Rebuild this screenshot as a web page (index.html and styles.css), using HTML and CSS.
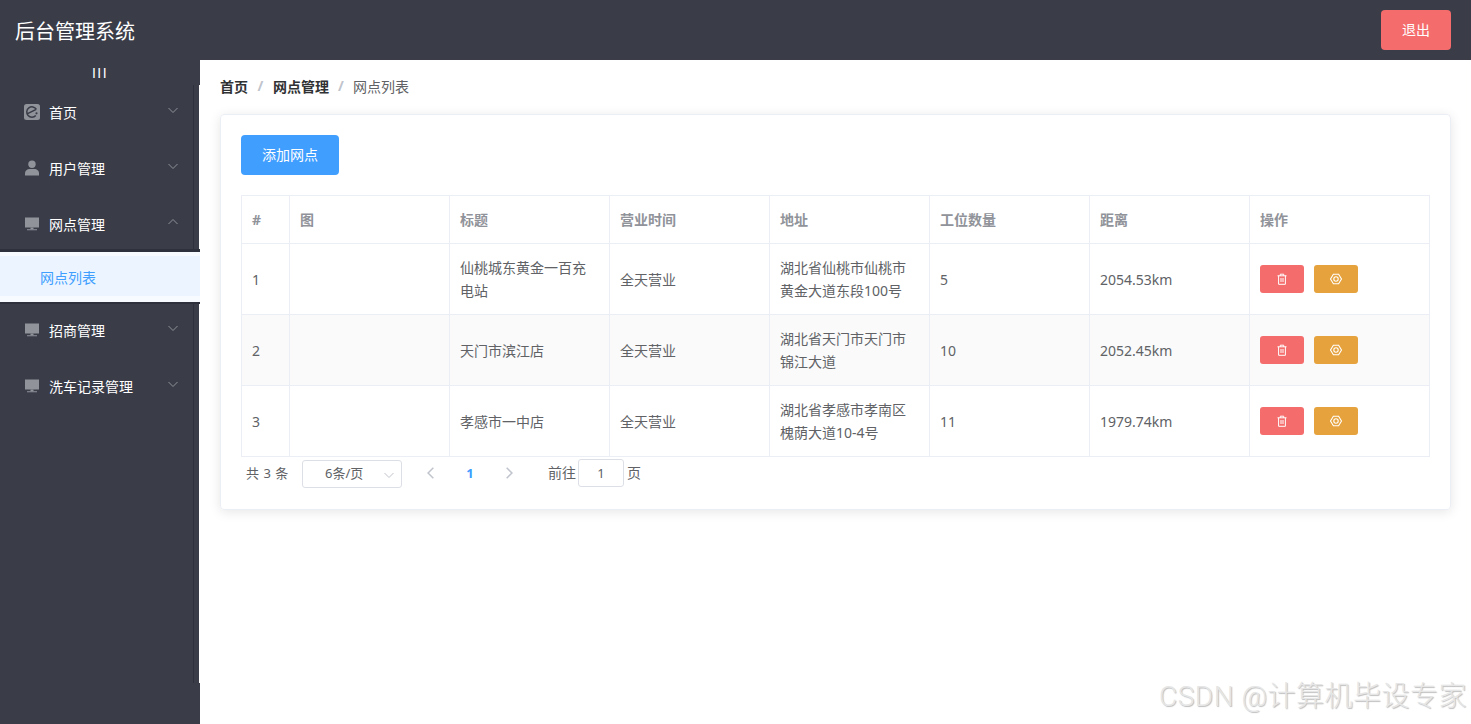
FILE: index.html
```html
<!DOCTYPE html>
<html lang="zh-CN">

<head>
    <meta charset="UTF-8">
    <title>后台管理系统</title>
    <link rel="stylesheet" href="styles.css">
</head>

<body>
    <svg class="defs" width="0" height="0">
        <symbol id="i-eleme" viewBox="0 0 16 16">
            <rect width="16" height="16" rx="2.500" fill="#909399"/>
            <path d="M12.400 5.300A5.200 5.200 0 1 0 11.800 11.500M3.600 9.700l8.600-4.400" fill="none" stroke="#3a3c48" stroke-width="1.500"/>
            <circle cx="12.500" cy="9.300" r="1.100" fill="#3a3c48"/>
        </symbol>
        <symbol id="i-user" viewBox="0 0 16 16">
            <circle cx="8" cy="4.200" r="3.700"/>
            <path d="M1 15.500v-2.300C1 10.800 3.200 9 5.500 9h5c2.300 0 4.500 1.800 4.500 4.200v2.300z"/>
        </symbol>
        <symbol id="i-screen" viewBox="0 0 16 16">
            <path d="M1 1.500h14V11.500H1zM3 13.200h10v1H3z"/>
            <path d="M6.500 11.500h3v1.800h-3z"/>
        </symbol>
        <symbol id="i-down" viewBox="0 0 12 12">
            <path d="M1.500 4 6 8.500 10.500 4" fill="none" stroke="currentColor" stroke-width="1"/>
        </symbol>
        <symbol id="i-trash" viewBox="0 0 12 12">
            <path d="M1.500 2.800h9M4.300 2.800V1.200h3.400v1.600M2.600 2.800v8.500h6.800V2.800M5 5v4M7 5v4" fill="none" stroke="currentColor" stroke-width="1"/>
        </symbol>
        <symbol id="i-gear" viewBox="0 0 12 12">
            <path d="M3.400 1.200h5.200L11.500 6 8.600 10.800H3.400L.5 6z" fill="none" stroke="currentColor" stroke-width="1.100"/>
            <circle cx="6" cy="6" r="2.200" fill="none" stroke="currentColor" stroke-width="1.100"/>
        </symbol>
    </svg>

    <div class="header">
        <div class="logo">后台管理系统</div>
        <button class="btn-logout">退出</button>
    </div>

    <div class="layout">
        <div class="sidebar">
            <div class="collapse-btn">III</div>
            <ul class="menu">
                <li class="menu-item">
                    <svg class="menu-icon"><use href="#i-eleme"/></svg>
                    <span class="menu-label">首页</span>
                    <svg class="menu-arrow"><use href="#i-down"/></svg>
                </li>
                <li class="menu-item">
                    <svg class="menu-icon"><use href="#i-user"/></svg>
                    <span class="menu-label">用户管理</span>
                    <svg class="menu-arrow"><use href="#i-down"/></svg>
                </li>
                <li class="menu-item">
                    <svg class="menu-icon"><use href="#i-screen"/></svg>
                    <span class="menu-label">网点管理</span>
                    <svg class="menu-arrow arrow-up"><use href="#i-down"/></svg>
                </li>
                <li class="submenu-item">网点列表</li>
                <li class="menu-item">
                    <svg class="menu-icon"><use href="#i-screen"/></svg>
                    <span class="menu-label">招商管理</span>
                    <svg class="menu-arrow"><use href="#i-down"/></svg>
                </li>
                <li class="menu-item">
                    <svg class="menu-icon"><use href="#i-screen"/></svg>
                    <span class="menu-label">洗车记录管理</span>
                    <svg class="menu-arrow"><use href="#i-down"/></svg>
                </li>
            </ul>
        </div>

        <div class="main">
            <div class="breadcrumb">
                <span class="crumb-link">首页</span>
                <span class="crumb-sep">/</span>
                <span class="crumb-link">网点管理</span>
                <span class="crumb-sep crumb-sep-last">/</span>
                <span class="crumb-current">网点列表</span>
            </div>

            <div class="card">
                <button class="btn-add">添加网点</button>

                <table class="data-table">
                    <thead>
                        <tr>
                            <th class="col-index">#</th>
                            <th class="col-std">图</th>
                            <th class="col-std">标题</th>
                            <th class="col-std">营业时间</th>
                            <th class="col-std">地址</th>
                            <th class="col-std">工位数量</th>
                            <th class="col-std">距离</th>
                            <th>操作</th>
                        </tr>
                    </thead>
                    <tbody>
                        <tr>
                            <td>1</td>
                            <td></td>
                            <td>仙桃城东黄金一百充电站</td>
                            <td>全天营业</td>
                            <td>湖北省仙桃市仙桃市黄金大道东段100号</td>
                            <td>5</td>
                            <td>2054.53km</td>
                            <td>
                                <div class="row-actions">
                                    <button class="btn-mini btn-danger"><svg><use href="#i-trash"/></svg></button>
                                    <button class="btn-mini btn-warning"><svg><use href="#i-gear"/></svg></button>
                                </div>
                            </td>
                        </tr>
                        <tr class="stripe">
                            <td>2</td>
                            <td></td>
                            <td>天门市滨江店</td>
                            <td>全天营业</td>
                            <td>湖北省天门市天门市锦江大道</td>
                            <td>10</td>
                            <td>2052.45km</td>
                            <td>
                                <div class="row-actions">
                                    <button class="btn-mini btn-danger"><svg><use href="#i-trash"/></svg></button>
                                    <button class="btn-mini btn-warning"><svg><use href="#i-gear"/></svg></button>
                                </div>
                            </td>
                        </tr>
                        <tr>
                            <td>3</td>
                            <td></td>
                            <td>孝感市一中店</td>
                            <td>全天营业</td>
                            <td>湖北省孝感市孝南区槐荫大道10-4号</td>
                            <td>11</td>
                            <td>1979.74km</td>
                            <td>
                                <div class="row-actions">
                                    <button class="btn-mini btn-danger"><svg><use href="#i-trash"/></svg></button>
                                    <button class="btn-mini btn-warning"><svg><use href="#i-gear"/></svg></button>
                                </div>
                            </td>
                        </tr>
                    </tbody>
                </table>

                <div class="pagination">
                    <span class="page-total">共 3 条</span>
                    <div class="page-size">
                        <span>6条/页</span>
                        <svg class="page-size-arrow"><use href="#i-down"/></svg>
                    </div>
                    <svg class="page-prev" viewBox="0 0 12 12"><path d="M8 1.500 3.500 6 8 10.500" fill="none" stroke="currentColor" stroke-width="1.300"/></svg>
                    <span class="page-num">1</span>
                    <svg class="page-next" viewBox="0 0 12 12"><path d="M4 1.500 8.500 6 4 10.500" fill="none" stroke="currentColor" stroke-width="1.300"/></svg>
                    <span class="page-jump">前往</span>
                    <span class="page-input">1</span>
                    <span class="page-unit">页</span>
                </div>
            </div>
        </div>
    </div>

    <div class="watermark">CSDN @计算机毕设专家</div>
</body>

</html>
```

FILE: styles.css
```css
* {
    margin: 0;
    padding: 0;
    box-sizing: border-box
}

html,
body {
    height: 724px;
    overflow: hidden
}

body {
    font-family: "Noto Sans", "Noto Sans CJK SC", sans-serif;
    font-size: 14px;
    color: #606266;
    background: #fff;
    position: relative
}

.defs {
    position: absolute
}

button {
    font-family: inherit;
    border: none;
    cursor: pointer
}

/* header */
.header {
    height: 60px;
    background: #3a3c48;
    display: flex;
    align-items: center;
    justify-content: space-between;
    padding: 0 20px 0 15px
}

.logo {
    font-size: 20px;
    color: #fff
}

.btn-logout {
    width: 70px;
    height: 40px;
    background: #f56c6c;
    color: #fff;
    font-size: 14px;
    border-radius: 4px;
    padding-bottom: 2px
}

/* sidebar */
.layout {
    display: flex;
    height: 664px
}

.sidebar {
    width: 200px;
    flex-shrink: 0;
    background: #3a3c48;
    position: relative
}

/* the thin strip down the right side of the menu */
.sidebar::before {
    content: '';
    position: absolute;
    top: 25px;
    left: 193px;
    width: 1px;
    height: 598px;
    background: #2e303b
}

.sidebar::after {
    content: '';
    position: absolute;
    top: 25px;
    right: 0;
    width: 1px;
    height: 598px;
    background: #fff
}

.collapse-btn {
    height: 24px;
    line-height: 26px;
    text-align: center;
    font-family: "Liberation Sans", sans-serif;
    font-size: 14px;
    color: #fff;
    letter-spacing: 1.500px
}

.menu {
    list-style: none
}

.menu-item {
    height: 56px;
    display: flex;
    align-items: center;
    padding-left: 24px;
    color: #fff;
    position: relative
}

.menu-icon {
    width: 16px;
    height: 16px;
    fill: #909399;
    margin-right: 9px
}

.menu-label {
    color: #fff
}

.menu-arrow {
    position: absolute;
    right: 21px;
    top: 20px;
    width: 12px;
    height: 12px;
    color: #909399
}

.arrow-up {
    transform: rotate(180deg)
}

.submenu-item {
    height: 50px;
    line-height: 44px;
    padding-left: 40px;
    font-size: 14px;
    color: #409eff;
    background: #ecf5ff;
    border-top: 4px solid #f7faff;
    border-bottom: 6px solid #f7faff;
    box-shadow: 0 -3px 0 #2e303b, 0 2px 0 #2e303b;
    position: relative;
    z-index: 1
}

/* main */
.main {
    flex: 1;
    padding: 0 21px 0 20px
}

.breadcrumb {
    height: 54px;
    display: flex;
    align-items: center;
    font-size: 14px;
    padding-bottom: 3px
}

.crumb-link {
    color: #303133;
    font-weight: 700
}

.crumb-sep {
    width: 25px;
    text-align: center;
    color: #c0c4cc;
    font-weight: 700
}

.crumb-sep-last {
    width: 24px
}

.crumb-current {
    color: #606266
}

.card {
    height: 396px;
    border: 1px solid #ebeef5;
    border-radius: 4px;
    box-shadow: 0 2px 12px rgba(0, 0, 0, .1);
    padding: 20px
}

.btn-add {
    display: block;
    width: 98px;
    height: 40px;
    background: #409eff;
    color: #fff;
    font-size: 14px;
    border-radius: 4px;
    margin-bottom: 20px;
    padding-bottom: 3px
}

.data-table {
    width: 1189px;
    border-collapse: collapse;
    table-layout: fixed
}

.data-table th,
.data-table td {
    border: 1px solid #ebeef5;
    padding: 0 10px;
    text-align: left;
    line-height: 23px
}

.data-table th {
    height: 48px;
    font-size: 14px;
    color: #909399;
    font-weight: 700
}

.data-table td {
    height: 71px
}

.col-index {
    width: 48px
}

.col-std {
    width: 160px
}

.stripe td {
    background: #fafafa
}

.row-actions {
    display: flex;
    gap: 10px
}

.btn-mini {
    width: 44px;
    height: 28px;
    border-radius: 3px;
    color: #fff;
    display: flex;
    align-items: center;
    justify-content: center
}

.btn-mini svg {
    width: 12px;
    height: 12px
}

.btn-danger {
    background: #f56c6c
}

.btn-warning {
    background: #e6a23c
}

/* pagination */
.pagination {
    display: flex;
    align-items: center;
    height: 32px;
    margin-left: 5px;
    font-size: 13px
}

.page-total {
    width: 56px;
    word-spacing: 1px;
    padding-bottom: 2px
}

.page-size {
    width: 100px;
    height: 28px;
    margin-top: 2px;
    border: 1px solid #dcdfe6;
    border-radius: 3px;
    display: flex;
    align-items: center;
    padding: 0 0 4px 22px;
    position: relative
}

.page-size-arrow {
    position: absolute;
    right: 6px;
    top: 8px;
    width: 12px;
    height: 12px;
    color: #c0c4cc
}

.page-prev,
.page-next {
    width: 14px;
    height: 14px;
    color: #c0c4cc
}

.page-prev {
    margin-left: 22px
}

.page-num {
    width: 64px;
    text-align: center;
    color: #409eff;
    font-weight: 700
}

.page-jump {
    margin-left: 32px;
    font-size: 14px;
    padding-bottom: 2px
}

.page-input {
    width: 46px;
    height: 28px;
    line-height: 26px;
    text-align: center;
    border: 1px solid #dcdfe6;
    border-radius: 3px;
    margin: 0 3px 0 2px
}

.page-unit {
    font-size: 14px;
    padding-bottom: 2px
}

.watermark {
    position: absolute;
    right: 4px;
    top: 679px;
    font-size: 28px;
    line-height: 36px;
    font-weight: 300;
    letter-spacing: .5px;
    color: #e6e6e6;
    text-shadow: 1px 1px 1px #bdbdbd;
    font-family: "Roboto", "Noto Sans CJK SC", sans-serif
}
```
